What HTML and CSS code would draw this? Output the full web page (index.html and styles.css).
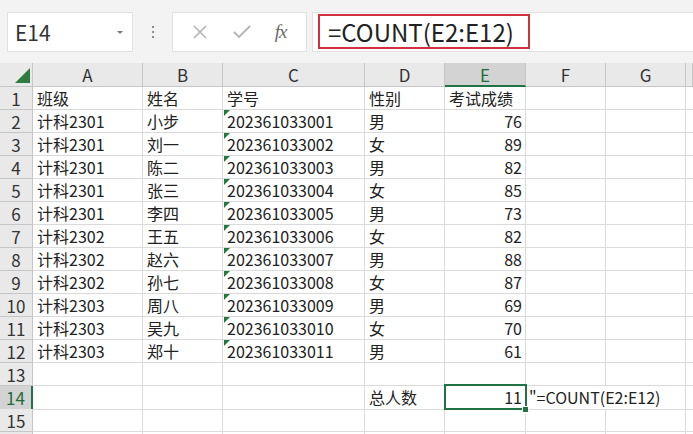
FILE: index.html
```html
<!DOCTYPE html>
<html lang="zh-CN">
<head>
  <meta charset="UTF-8">
  <title>成绩表</title>
  <link rel="stylesheet" href="styles.css">
</head>
<body>
  <div class="toolbar">
    <div class="name-box">
      <span class="name-text">E14</span>
      <span class="caret"></span>
    </div>
    <div class="grip"><i></i><i></i><i></i></div>
    <div class="fx-buttons">
      <svg class="btn" width="18" height="18" viewBox="0 0 18 18"><path d="M3 3 L15 15 M15 3 L3 15" stroke="#b4b4b4" stroke-width="1.6" fill="none"/></svg>
      <svg class="btn" width="20" height="18" viewBox="0 0 20 18"><path d="M2 9 L7 14 L18 3" stroke="#b4b4b4" stroke-width="1.8" fill="none"/></svg>
      <span class="fx">fx</span>
    </div>
    <div class="formula">
      <div class="formula-mark">=COUNT(E2:E12)</div>
    </div>
  </div>

  <div class="sheet">
    <div class="row head">
      <div class="corner"><span class="corner-tri"></span></div>
      <div class="col">A</div><div class="col">B</div><div class="col">C</div><div class="col">D</div>
      <div class="col active">E</div><div class="col">F</div><div class="col">G</div><div class="col"></div>
    </div>
    <div class="row">
      <div class="num">1</div>
      <div class="cell">班级</div><div class="cell">姓名</div><div class="cell">学号</div><div class="cell">性别</div>
      <div class="cell">考试成绩</div><div class="cell"></div><div class="cell"></div><div class="cell"></div>
    </div>
    <div class="row">
      <div class="num">2</div>
      <div class="cell">计科2301</div><div class="cell">小步</div><div class="cell txt">202361033001</div><div class="cell">男</div>
      <div class="cell n">76</div><div class="cell"></div><div class="cell"></div><div class="cell"></div>
    </div>
    <div class="row">
      <div class="num">3</div>
      <div class="cell">计科2301</div><div class="cell">刘一</div><div class="cell txt">202361033002</div><div class="cell">女</div>
      <div class="cell n">89</div><div class="cell"></div><div class="cell"></div><div class="cell"></div>
    </div>
    <div class="row">
      <div class="num">4</div>
      <div class="cell">计科2301</div><div class="cell">陈二</div><div class="cell txt">202361033003</div><div class="cell">男</div>
      <div class="cell n">82</div><div class="cell"></div><div class="cell"></div><div class="cell"></div>
    </div>
    <div class="row">
      <div class="num">5</div>
      <div class="cell">计科2301</div><div class="cell">张三</div><div class="cell txt">202361033004</div><div class="cell">女</div>
      <div class="cell n">85</div><div class="cell"></div><div class="cell"></div><div class="cell"></div>
    </div>
    <div class="row">
      <div class="num">6</div>
      <div class="cell">计科2301</div><div class="cell">李四</div><div class="cell txt">202361033005</div><div class="cell">男</div>
      <div class="cell n">73</div><div class="cell"></div><div class="cell"></div><div class="cell"></div>
    </div>
    <div class="row">
      <div class="num">7</div>
      <div class="cell">计科2302</div><div class="cell">王五</div><div class="cell txt">202361033006</div><div class="cell">女</div>
      <div class="cell n">82</div><div class="cell"></div><div class="cell"></div><div class="cell"></div>
    </div>
    <div class="row">
      <div class="num">8</div>
      <div class="cell">计科2302</div><div class="cell">赵六</div><div class="cell txt">202361033007</div><div class="cell">男</div>
      <div class="cell n">88</div><div class="cell"></div><div class="cell"></div><div class="cell"></div>
    </div>
    <div class="row">
      <div class="num">9</div>
      <div class="cell">计科2302</div><div class="cell">孙七</div><div class="cell txt">202361033008</div><div class="cell">女</div>
      <div class="cell n">87</div><div class="cell"></div><div class="cell"></div><div class="cell"></div>
    </div>
    <div class="row">
      <div class="num">10</div>
      <div class="cell">计科2303</div><div class="cell">周八</div><div class="cell txt">202361033009</div><div class="cell">男</div>
      <div class="cell n">69</div><div class="cell"></div><div class="cell"></div><div class="cell"></div>
    </div>
    <div class="row">
      <div class="num">11</div>
      <div class="cell">计科2303</div><div class="cell">吴九</div><div class="cell txt">202361033010</div><div class="cell">女</div>
      <div class="cell n">70</div><div class="cell"></div><div class="cell"></div><div class="cell"></div>
    </div>
    <div class="row">
      <div class="num">12</div>
      <div class="cell">计科2303</div><div class="cell">郑十</div><div class="cell txt">202361033011</div><div class="cell">男</div>
      <div class="cell n">61</div><div class="cell"></div><div class="cell"></div><div class="cell"></div>
    </div>
    <div class="row">
      <div class="num">13</div>
      <div class="cell"></div><div class="cell"></div><div class="cell"></div><div class="cell"></div>
      <div class="cell"></div><div class="cell"></div><div class="cell"></div><div class="cell"></div>
    </div>
    <div class="row">
      <div class="num active">14</div>
      <div class="cell"></div><div class="cell"></div><div class="cell"></div><div class="cell">总人数</div>
      <div class="cell n selected">11<span class="handle"></span></div>
      <div class="cell spill">"=COUNT(E2:E12)</div><div class="cell"></div>
    </div>
    <div class="row">
      <div class="num">15</div>
      <div class="cell"></div><div class="cell"></div><div class="cell"></div><div class="cell"></div>
      <div class="cell"></div><div class="cell"></div><div class="cell"></div><div class="cell"></div>
    </div>
    <div class="row">
      <div class="num"></div>
      <div class="cell"></div><div class="cell"></div><div class="cell"></div><div class="cell"></div>
      <div class="cell"></div><div class="cell"></div><div class="cell"></div><div class="cell"></div>
    </div>
  </div>
</body>
</html>
```

FILE: styles.css
```css
body {
  margin: 0;
  width: 693px;
  height: 434px;
  overflow: hidden;
  background: #fff;
  font-family: "Noto Sans CJK SC", "Noto Sans", sans-serif;
  color: #222;
}
.toolbar {
  display: flex;
  align-items: flex-start;
  height: 63px;
  box-sizing: border-box;
  padding: 12px 0 0 7px;
  background: #f3f3f3;
  overflow: hidden;
}
.name-box {
  display: flex;
  align-items: center;
  justify-content: space-between;
  width: 126px;
  height: 40px;
  box-sizing: border-box;
  padding: 0 9px 0 7px;
  background: #fff;
  border: 1px solid #e1e1e1;
}
.name-text {
  font-size: 21px;
  color: #333;
}
.caret {
  width: 0;
  height: 0;
  border-left: 3px solid transparent;
  border-right: 3px solid transparent;
  border-top: 3px solid #777;
}
.grip {
  display: flex;
  flex-direction: column;
  gap: 3px;
  width: 39px;
  align-items: center;
  padding-top: 14px;
}
.grip i {
  width: 2px;
  height: 2px;
  background: #8a8a8a;
}
.fx-buttons {
  display: flex;
  align-items: center;
  justify-content: space-around;
  width: 135px;
  height: 40px;
  box-sizing: border-box;
  padding: 0 8px 0 6px;
  background: #fff;
  border: 1px solid #e1e1e1;
}
.fx {
  font-family: "Liberation Serif", serif;
  font-style: italic;
  font-size: 19px;
  color: #6a6a6a;
  letter-spacing: -1px;
}
.formula {
  flex: 1;
  height: 40px;
  margin-left: 5px;
  box-sizing: border-box;
  padding: 1px 0 0 5px;
  background: #fff;
  border: 1px solid #e1e1e1;
  border-right: none;
}
.formula-mark {
  width: 212px;
  height: 35px;
  box-sizing: border-box;
  padding-left: 8px;
  border: 2px solid #d0313a;
  font-size: 24px;
  line-height: 31px;
  color: #222;
}
.sheet {
  display: flex;
  flex-direction: column;
}
.row {
  display: grid;
  grid-template-columns: 33px 110px 80px 142px 80px 81px 80px 80px 1fr;
  height: 23px;
  flex: none;
}
.row.head {
  height: 24px;
}
.row > div {
  box-sizing: border-box;
  border-right: 1px solid #dadada;
  border-bottom: 1px solid #dadada;
  white-space: nowrap;
  overflow: hidden;
}
.corner {
  position: relative;
  background: #e9e9e9;
  border-color: #c6c6c6 !important;
}
.corner-tri {
  position: absolute;
  right: 2px;
  bottom: 3px;
  width: 0;
  height: 0;
  border-left: 15px solid transparent;
  border-bottom: 15px solid #2f7a3e;
}
.col {
  background: #e9e9e9;
  border-color: #c6c6c6 !important;
  text-align: center;
  font-size: 17px;
  line-height: 23px;
  color: #333;
}
.col.active {
  background: #d3d3d3;
  color: #1f6b3a;
  border-bottom: 2px solid #217346 !important;
}
.num {
  background: #e9e9e9;
  border-color: #c6c6c6 !important;
  text-align: center;
  font-size: 17px;
  line-height: 23px;
  color: #333;
}
.num.active {
  background: #d3d3d3;
  color: #1f6b3a;
  border-right: 2px solid #217346 !important;
}
.cell {
  padding: 0 3px 0 4px;
  font-size: 16px;
  line-height: 23px;
}
.cell.n {
  text-align: right;
}
.cell.txt {
  position: relative;
}
.cell.txt::before {
  content: "";
  position: absolute;
  left: 1px;
  top: 0;
  width: 0;
  height: 0;
  border-top: 6px solid #1f7a3c;
  border-right: 6px solid transparent;
}
.row > .selected {
  position: relative;
  overflow: visible;
}
.selected::after {
  content: "";
  position: absolute;
  left: -1px;
  top: -2px;
  right: -2px;
  bottom: -1px;
  border: 2px solid #217346;
}
.handle {
  position: absolute;
  right: -4px;
  bottom: -4px;
  width: 5px;
  height: 5px;
  background: #217346;
  border: 1px solid #fff;
  z-index: 2;
}
.spill {
  grid-column: span 2;
  padding-left: 3px;
}
```
